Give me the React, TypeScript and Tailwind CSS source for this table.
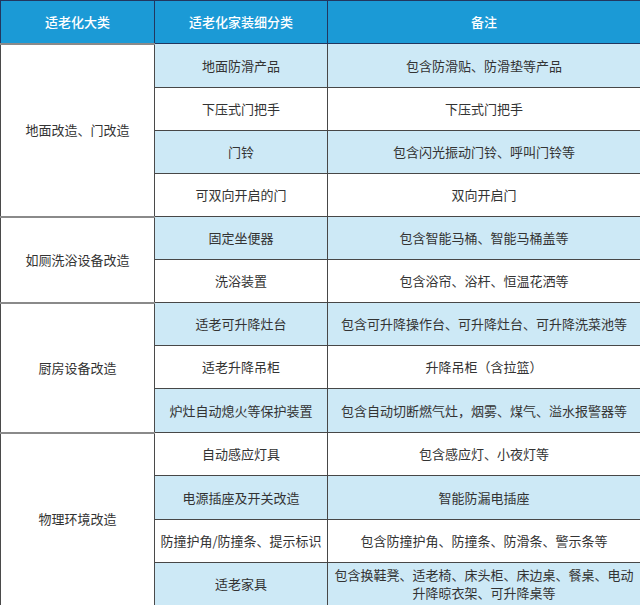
type Row = { item: string; note: string[]; h: number }
type Group = { name: string; rows: Row[] }

const groups: Group[] = [
  {
    name: '地面改造、门改造',
    rows: [
      { item: '地面防滑产品', note: ['包含防滑贴、防滑垫等产品'], h: 44 },
      { item: '下压式门把手', note: ['下压式门把手'], h: 43 },
      { item: '门铃', note: ['包含闪光振动门铃、呼叫门铃等'], h: 43 },
      { item: '可双向开启的门', note: ['双向开启门'], h: 43 },
    ],
  },
  {
    name: '如厕洗浴设备改造',
    rows: [
      { item: '固定坐便器', note: ['包含智能马桶、智能马桶盖等'], h: 43 },
      { item: '洗浴装置', note: ['包含浴帘、浴杆、恒温花洒等'], h: 43 },
    ],
  },
  {
    name: '厨房设备改造',
    rows: [
      { item: '适老可升降灶台', note: ['包含可升降操作台、可升降灶台、可升降洗菜池等'], h: 43 },
      { item: '适老升降吊柜', note: ['升降吊柜（含拉篮）'], h: 43 },
      { item: '炉灶自动熄火等保护装置', note: ['包含自动切断燃气灶，烟雾、煤气、溢水报警器等'], h: 44 },
    ],
  },
  {
    name: '物理环境改造',
    rows: [
      { item: '自动感应灯具', note: ['包含感应灯、小夜灯等'], h: 43 },
      { item: '电源插座及开关改造', note: ['智能防漏电插座'], h: 44 },
      { item: '防撞护角/防撞条、提示标识', note: ['包含防撞护角、防撞条、防滑条、警示条等'], h: 43 },
      { item: '适老家具', note: ['包含换鞋凳、适老椅、床头柜、床边桌、餐桌、电动', '升降晾衣架、可升降桌等'], h: 43 },
    ],
  },
]

export default function App() {
  let idx = 0
  return (
    <div className="w-[640px] h-[605px] overflow-hidden bg-white">
      <table
        className="w-[640px] table-fixed border-collapse text-[13px] leading-[18px] text-[#333333] text-center"
        style={{ fontFamily: '"Noto Sans CJK SC", "Noto Sans", sans-serif' }}
      >
        <colgroup>
          <col className="w-[154px]" />
          <col className="w-[173px]" />
          <col className="w-[313px]" />
        </colgroup>
        <thead>
          <tr className="h-[43px] bg-[#1b9ad6] text-white">
            <th className="border border-[#22365f] font-medium">适老化大类</th>
            <th className="border border-[#22365f] font-medium">适老化家装细分类</th>
            <th className="border border-[#22365f] font-medium">备注</th>
          </tr>
        </thead>
        <tbody>
          {groups.map((g) =>
            g.rows.map((r, i) => {
              idx += 1
              const blue = idx % 2 === 1
              const bg = blue ? 'bg-[#cde9f6]' : 'bg-white'
              return (
                <tr key={r.item} style={{ height: r.h }}>
                  {i === 0 && (
                    <td
                      rowSpan={g.rows.length}
                      className="border-x border-x-[#4a4a4a] border-y-2 border-y-[#8a8a8a] bg-white px-1"
                    >
                      {g.name}
                    </td>
                  )}
                  <td className={`border border-[#474747] px-1 whitespace-nowrap ${bg}`}>{r.item}</td>
                  <td className={`border border-[#474747] px-1 ${bg}`}>
                    {r.note.map((n) => (
                      <div key={n} className="whitespace-nowrap">
                        {n}
                      </div>
                    ))}
                  </td>
                </tr>
              )
            })
          )}
        </tbody>
      </table>
    </div>
  )
}
